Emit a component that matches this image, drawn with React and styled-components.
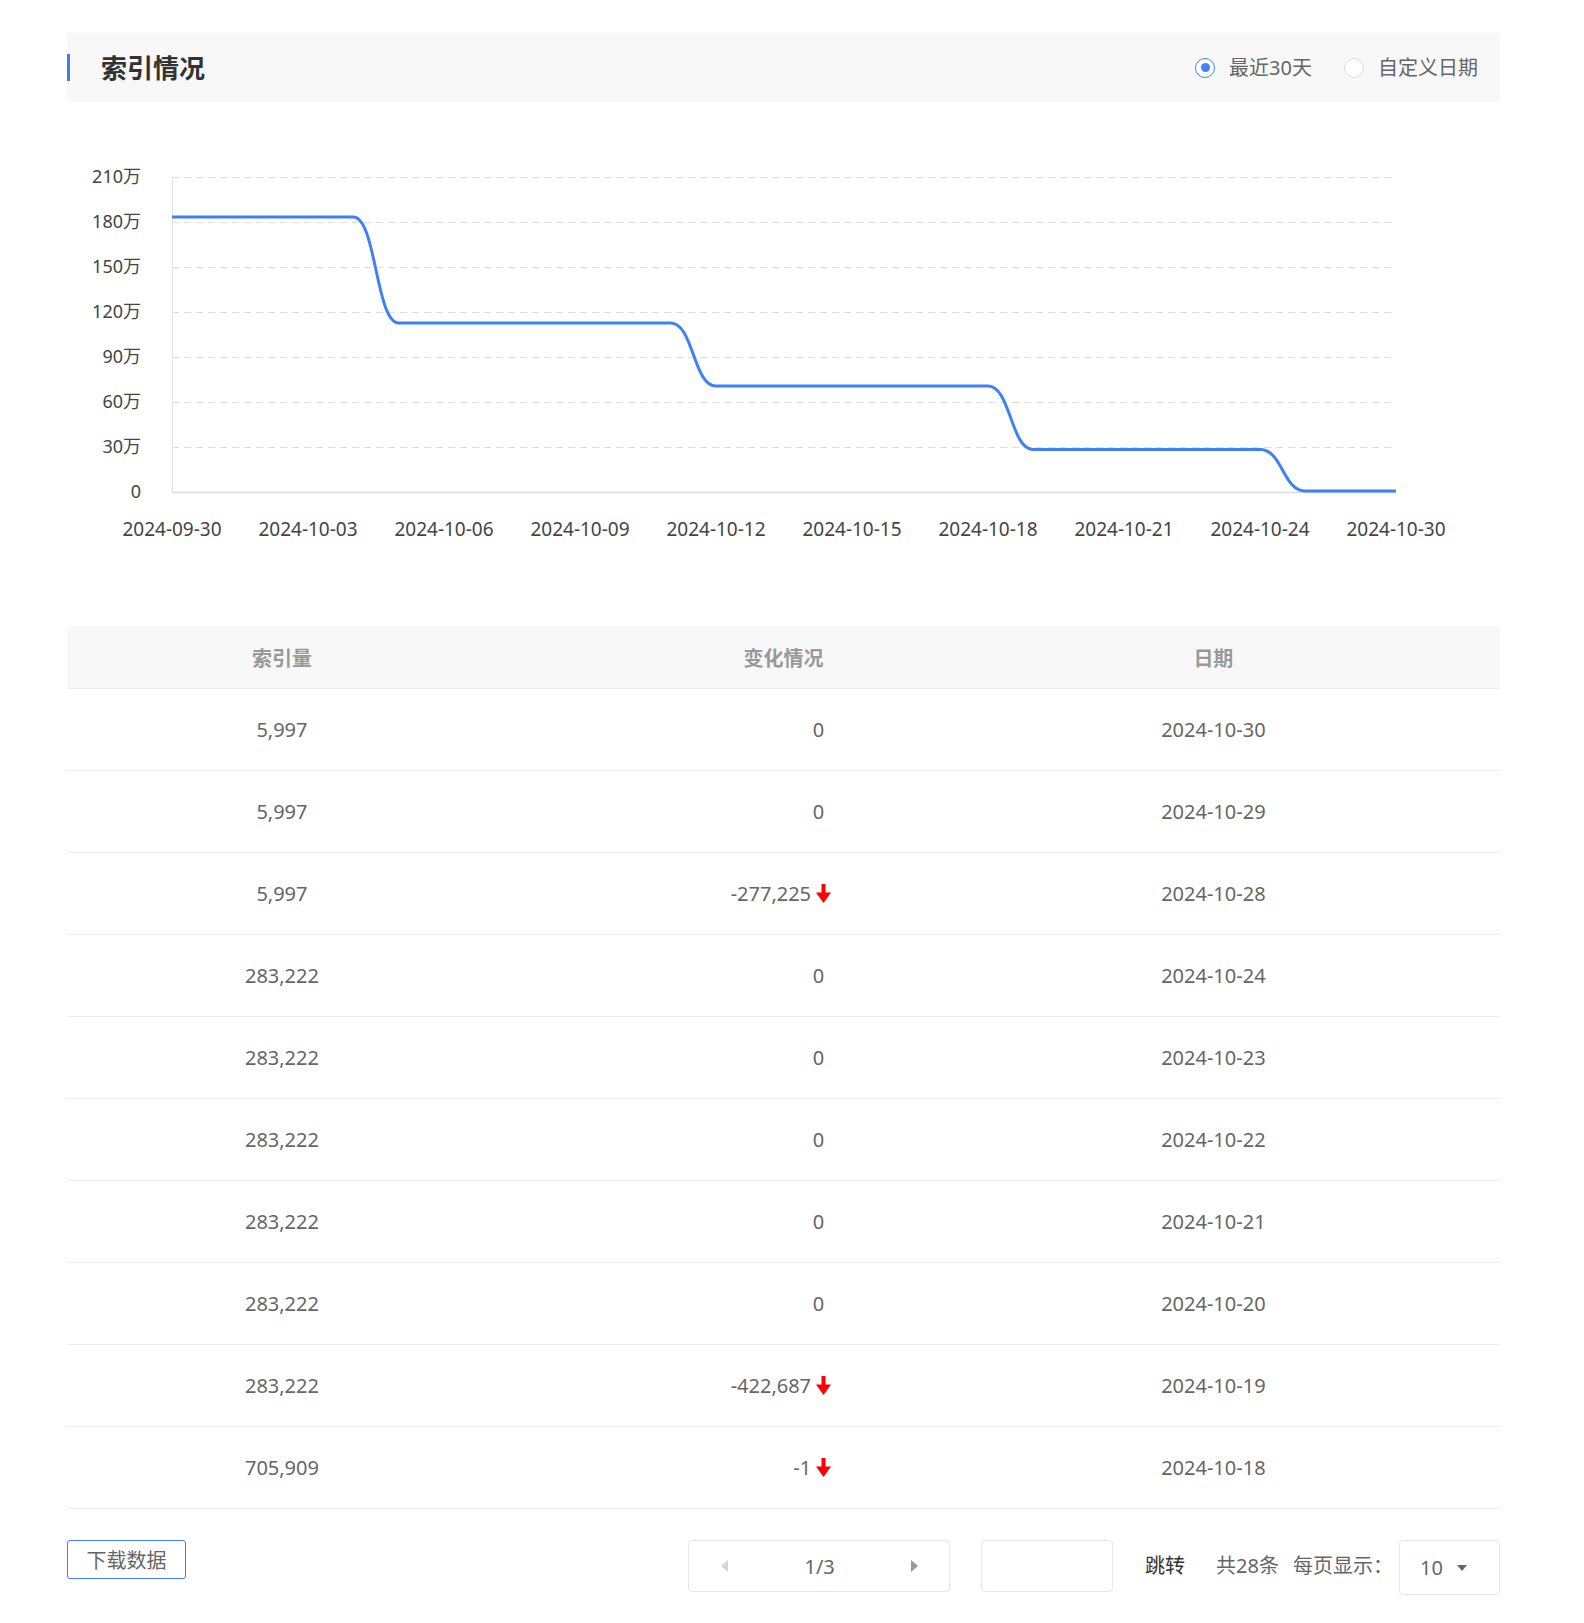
import React from "react";
import styled, { createGlobalStyle } from "styled-components";

const GlobalStyle = createGlobalStyle`
  html, body { margin: 0; padding: 0; background: #fff; }
  body { font-family: "Noto Sans", "Noto Sans CJK SC", sans-serif; color: #666; }
  * { box-sizing: border-box; }
`;

const Page = styled.div`
  width: 1433px;
  margin: 33px 0 0 67px;
  padding-bottom: 28px;
`;

const HeaderBar = styled.div`
  height: 69px;
  background: #f8f8f8;
  display: flex;
  align-items: center;
  justify-content: space-between;
  padding-right: 22px;
`;

const TitleWrap = styled.div`
  display: flex;
  align-items: center;
  gap: 31px;
`;

const Accent = styled.span`
  width: 3px;
  height: 27px;
  background: #3d7ef7;
`;

const Title = styled.h2`
  margin: 0;
  font-size: 26px;
  font-weight: 700;
  color: #333;
  line-height: 1;
`;

const RadioGroup = styled.div`
  display: flex;
  align-items: center;
  gap: 32px;
`;

const RadioItem = styled.label`
  display: flex;
  align-items: center;
  gap: 14px;
  font-size: 20px;
  color: #666;
  line-height: 1;
`;

const RadioDot = styled.span`
  width: 20px;
  height: 20px;
  border-radius: 50%;
  background: #fff;
  border: 1.5px solid ${(p) => (p.$checked ? "#4080ff" : "#dcdcdc")};
  display: flex;
  align-items: center;
  justify-content: center;
  &::after {
    content: "";
    width: 9px;
    height: 9px;
    border-radius: 50%;
    background: ${(p) => (p.$checked ? "#4080ff" : "transparent")};
  }
`;

const ChartBox = styled.div`
  margin-top: 48px;
  height: 476px;
`;

const Table = styled.div`
  display: flex;
  flex-direction: column;
`;

const Row = styled.div`
  display: grid;
  grid-template-columns: 30% 40% 20% 10%;
  align-items: center;
  height: ${(p) => (p.$head ? "63px" : "82px")};
  background: ${(p) => (p.$head ? "#f8f8f8" : "#fff")};
  border-bottom: 1px solid #eeeeee;
`;

const HeadCell = styled.div`
  text-align: center;
  font-size: 20px;
  font-weight: 700;
  color: #999;
`;

const Cell = styled.div`
  text-align: center;
  font-size: 20px;
  color: #666;
`;

const ChangeCell = styled.div`
  display: flex;
  justify-content: flex-end;
  align-items: center;
  gap: 5px;
  font-size: 20px;
  color: #666;
  padding-right: ${(p) => (p.$plain ? "246px" : "239px")};
`;

const Footer = styled.div`
  margin-top: 31px;
  display: flex;
  justify-content: space-between;
  align-items: flex-start;
`;

const DownloadButton = styled.button`
  width: 119px;
  height: 39px;
  border: 1px solid #4080ff;
  border-radius: 3px;
  background: #fff;
  font-family: inherit;
  font-size: 20px;
  color: #666;
  padding: 0;
  cursor: pointer;
`;

const PagerGroup = styled.div`
  display: flex;
  align-items: flex-start;
`;

const PagerBox = styled.div`
  width: 262px;
  height: 52px;
  border: 1px solid #e5e5e5;
  border-radius: 4px;
  display: flex;
  align-items: center;
  justify-content: space-between;
  padding: 0 31px 0 32px;
  font-size: 20px;
  color: #666;
`;

const Tri = styled.span`
  width: 0;
  height: 0;
  border-top: 6.5px solid transparent;
  border-bottom: 6.5px solid transparent;
  ${(p) =>
    p.$dir === "left"
      ? `border-right: 7px solid ${p.$disabled ? "#d6d6d6" : "#999"};`
      : `border-left: 7px solid ${p.$disabled ? "#d6d6d6" : "#999"};`}
`;

const JumpInput = styled.input`
  width: 132px;
  height: 52px;
  margin-left: 31px;
  border: 1px solid #e5e5e5;
  border-radius: 4px;
  outline: none;
  font-family: inherit;
  font-size: 20px;
`;

const PagerText = styled.span`
  line-height: 52px;
  font-size: 20px;
  color: ${(p) => (p.$dark ? "#333" : "#666")};
  margin-left: ${(p) => p.$ml || 0}px;
  white-space: nowrap;
`;

const SizeSelect = styled.div`
  width: 101px;
  height: 55px;
  margin-left: 6px;
  border: 1px solid #e5e5e5;
  border-radius: 4px;
  display: flex;
  align-items: center;
  gap: 14px;
  padding-left: 20px;
  font-size: 20px;
  color: #666;
  &::after {
    content: "";
    width: 0;
    height: 0;
    border-left: 5px solid transparent;
    border-right: 5px solid transparent;
    border-top: 6px solid #666;
  }
`;

const DownArrow = () => (
  <svg width="15" height="19" viewBox="0 0 15 19" aria-hidden="true">
    <rect x="5.5" y="0" width="4" height="11" fill="#f00" />
    <polygon points="0,8.5 15,8.5 7.5,19" fill="#f00" />
  </svg>
);

const dates = [
  "2024-09-30",
  ...Array.from({ length: 24 }, (_, i) => `2024-10-${String(i + 1).padStart(2, "0")}`),
  "2024-10-28",
  "2024-10-29",
  "2024-10-30",
];
const values = [
  ...Array(5).fill(1833000),
  ...Array(7).fill(1127000),
  ...Array(6).fill(705910),
  705909,
  ...Array(6).fill(283222),
  ...Array(3).fill(5997),
];

const X0 = 105;
const X1 = 1329;
const Y0 = 342;
const step = (X1 - X0) / 27;
const px = (i) => X0 + i * step;
const py = (v) => Y0 - (v * 45) / 300000;

function buildPath() {
  let d = `M${px(0)},${py(values[0])}`;
  for (let i = 1; i < values.length; i++) {
    const x0 = px(i - 1), y0 = py(values[i - 1]);
    const x1 = px(i), y1 = py(values[i]);
    if (Math.abs(y0 - y1) < 0.01) {
      d += ` L${x1},${y1}`;
    } else {
      const c = (x1 - x0) * 0.5;
      d += ` C${x0 + c},${y0} ${x1 - c},${y1} ${x1},${y1}`;
    }
  }
  return d;
}

const yLabels = ["0", "30万", "60万", "90万", "120万", "150万", "180万", "210万"];

const Chart = () => (
  <svg width="1433" height="476" viewBox="0 0 1433 476">
    {yLabels.map((l, k) => {
      const y = Y0 - k * 45;
      return (
        <g key={l}>
          {k > 0 && (
            <line x1={X0} x2={X1} y1={y + 0.5} y2={y + 0.5} stroke="#dedede" strokeWidth="1" strokeDasharray="7 5" />
          )}
          <text
            x="74"
            y={y - 1}
            textAnchor="end"
            dominantBaseline="central"
            fontSize="18"
            fill="#444"
            fontFamily='"Noto Sans", "Noto Sans CJK SC", sans-serif'
          >
            {l}
          </text>
        </g>
      );
    })}
    <line x1={X0 + 0.5} x2={X0 + 0.5} y1={Y0 - 315} y2={Y0} stroke="#e3e3e3" strokeWidth="1" />
    <line x1={X0} x2={X1} y1={Y0 + 0.5} y2={Y0 + 0.5} stroke="#dcdcdc" strokeWidth="1.5" />
    {dates.map((d, i) =>
      i % 3 === 0 ? (
        <text
          key={d}
          x={px(i)}
          y="379"
          textAnchor="middle"
          dominantBaseline="central"
          fontSize="19"
          fill="#444"
          fontFamily='"Noto Sans", "Noto Sans CJK SC", sans-serif'
        >
          {d}
        </text>
      ) : null
    )}
    <path d={buildPath()} fill="none" stroke="#3f80f7" strokeWidth="3" strokeLinejoin="round" />
  </svg>
);

const rows = [
  ["5,997", "0", "2024-10-30"],
  ["5,997", "0", "2024-10-29"],
  ["5,997", "-277,225", "2024-10-28"],
  ["283,222", "0", "2024-10-24"],
  ["283,222", "0", "2024-10-23"],
  ["283,222", "0", "2024-10-22"],
  ["283,222", "0", "2024-10-21"],
  ["283,222", "0", "2024-10-20"],
  ["283,222", "-422,687", "2024-10-19"],
  ["705,909", "-1", "2024-10-18"],
];

export default function App() {
  return (
    <>
      <GlobalStyle />
      <Page>
        <HeaderBar>
          <TitleWrap>
            <Accent />
            <Title>索引情况</Title>
          </TitleWrap>
          <RadioGroup>
            <RadioItem>
              <RadioDot $checked />
              最近30天
            </RadioItem>
            <RadioItem>
              <RadioDot />
              自定义日期
            </RadioItem>
          </RadioGroup>
        </HeaderBar>

        <ChartBox>
          <Chart />
        </ChartBox>

        <Table>
          <Row $head>
            <HeadCell>索引量</HeadCell>
            <HeadCell>变化情况</HeadCell>
            <HeadCell>日期</HeadCell>
            <span />
          </Row>
          {rows.map((r) => (
            <Row key={r[2]}>
              <Cell>{r[0]}</Cell>
              <ChangeCell $plain={r[1] === "0"}>
                <span>{r[1]}</span>
                {r[1] !== "0" && <DownArrow />}
              </ChangeCell>
              <Cell>{r[2]}</Cell>
              <span />
            </Row>
          ))}
        </Table>

        <Footer>
          <DownloadButton>下载数据</DownloadButton>
          <PagerGroup>
            <PagerBox>
              <Tri $dir="left" $disabled />
              <span>1/3</span>
              <Tri $dir="right" />
            </PagerBox>
            <JumpInput />
            <PagerText $dark $ml={32}>跳转</PagerText>
            <PagerText $ml={31}>共28条</PagerText>
            <PagerText $ml={14}>每页显示：</PagerText>
            <SizeSelect>10</SizeSelect>
          </PagerGroup>
        </Footer>
      </Page>
    </>
  );
}
